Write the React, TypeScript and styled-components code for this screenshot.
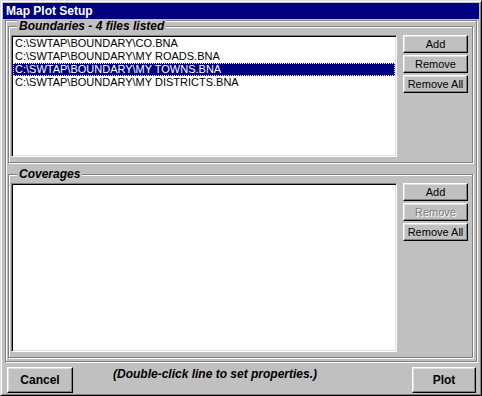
import styled, { createGlobalStyle } from 'styled-components'

const GlobalStyle = createGlobalStyle`
  html, body {
    margin: 0;
    padding: 0;
    background: #c0c0c0;
  }
  * {
    box-sizing: border-box;
  }
`

const Window = styled.div`
  width: 482px;
  height: 396px;
  padding: 2px;
  background: #c0c0c0;
  border: 1px solid;
  border-color: #dfdfdf #000000 #000000 #dfdfdf;
  box-shadow: inset 1px 1px 0 #ffffff, inset -1px -1px 0 #808080;
  display: flex;
  flex-direction: column;
  font-family: 'Liberation Sans', Arial, sans-serif;
  color: #000;
`

const TitleBar = styled.div`
  height: 16px;
  background: #000080;
  color: #fff;
  font-size: 12px;
  font-weight: bold;
  line-height: 16px;
  padding-left: 3px;
`

const OuterFrame = styled.div`
  margin: 1px 2px 0 2px;
  height: 342px;
  border: 1px solid #808080;
  box-shadow: 1px 1px 0 #ffffff, inset 1px 1px 0 #ffffff;
  padding: 5px 3px 3px 2px;
  display: flex;
  flex-direction: column;
  gap: 11px;
`

const Group = styled.div<{ $height: number }>`
  position: relative;
  height: ${(p) => p.$height}px;
  border: 1px solid #808080;
  box-shadow: 1px 1px 0 #ffffff, inset 1px 1px 0 #ffffff;
  padding: 8px 4px 5px 2px;
  display: flex;
  gap: 6px;
`

const Legend = styled.span`
  position: absolute;
  top: -7px;
  left: 8px;
  padding: 0 2px;
  background: #c0c0c0;
  font-size: 12px;
  font-weight: bold;
  font-style: italic;
  line-height: 13px;
`

const ListBox = styled.div`
  width: 386px;
  height: 100%;
  background: #ffffff;
  border: 1px solid;
  border-color: #808080 #ffffff #ffffff #808080;
  box-shadow: inset 1px 1px 0 #000000, inset -1px -1px 0 #dfdfdf;
  padding: 1px;
  overflow: hidden;
`

const Row = styled.div<{ $selected?: boolean }>`
  height: 13px;
  line-height: 11px;
  font-size: 11px;
  padding-left: 1px;
  white-space: nowrap;
  border: 1px ${(p) => (p.$selected ? 'dotted #ffff7f' : 'solid transparent')};
  background: ${(p) => (p.$selected ? '#000080' : 'transparent')};
  color: ${(p) => (p.$selected ? '#ffffff' : '#000000')};
`

const ButtonColumn = styled.div`
  display: flex;
  flex-direction: column;
  gap: 2px;
`

const Button = styled.button<{ $width: number; $height: number; $bold?: boolean }>`
  width: ${(p) => p.$width}px;
  height: ${(p) => p.$height}px;
  padding: 0;
  margin: 0;
  background: #c0c0c0;
  border: 1px solid;
  border-color: #ffffff #000000 #000000 #ffffff;
  box-shadow: inset -1px -1px 0 #808080, inset 1px 1px 0 #dfdfdf;
  font-family: 'Liberation Sans', Arial, sans-serif;
  font-size: ${(p) => (p.$bold ? 12 : 11)}px;
  font-weight: ${(p) => (p.$bold ? 'bold' : 'normal')};
  color: #000;
  line-height: 1;
  &:disabled {
    color: #808080;
    text-shadow: 1px 1px 0 #ffffff;
  }
`

const Footer = styled.div`
  flex: 1;
  display: flex;
  align-items: flex-start;
  padding: 5px 3px 0 4px;
`

const Hint = styled.div`
  flex: 1;
  margin-top: 1px;
  padding-left: 40px;
  font-size: 12px;
  font-weight: bold;
  font-style: italic;
  line-height: 13px;
`

const boundaryFiles = [
  'C:\\SWTAP\\BOUNDARY\\CO.BNA',
  'C:\\SWTAP\\BOUNDARY\\MY ROADS.BNA',
  'C:\\SWTAP\\BOUNDARY\\MY TOWNS.BNA',
  'C:\\SWTAP\\BOUNDARY\\MY DISTRICTS.BNA',
]

const SideButtons = ({ removeDisabled }: { removeDisabled?: boolean }) => (
  <ButtonColumn>
    <Button $width={65} $height={18}>Add</Button>
    <Button $width={65} $height={18} disabled={removeDisabled}>
      Remove
    </Button>
    <Button $width={65} $height={18}>Remove All</Button>
  </ButtonColumn>
)

const App = () => {
  const selected = 2
  return (
    <>
      <GlobalStyle />
      <Window>
        <TitleBar>Map Plot Setup</TitleBar>
        <OuterFrame>
          <Group $height={137}>
            <Legend>Boundaries - 4 files listed</Legend>
            <ListBox>
              {boundaryFiles.map((f, i) => (
                <Row key={f} $selected={i === selected}>
                  {f}
                </Row>
              ))}
            </ListBox>
            <SideButtons />
          </Group>
          <Group $height={184}>
            <Legend>Coverages</Legend>
            <ListBox />
            <SideButtons removeDisabled />
          </Group>
        </OuterFrame>
        <Footer>
          <Button $width={66} $height={26} $bold>
            Cancel
          </Button>
          <Hint>(Double-click line to set properties.)</Hint>
          <Button $width={64} $height={26} $bold>
            Plot
          </Button>
        </Footer>
      </Window>
    </>
  )
}

export default App
